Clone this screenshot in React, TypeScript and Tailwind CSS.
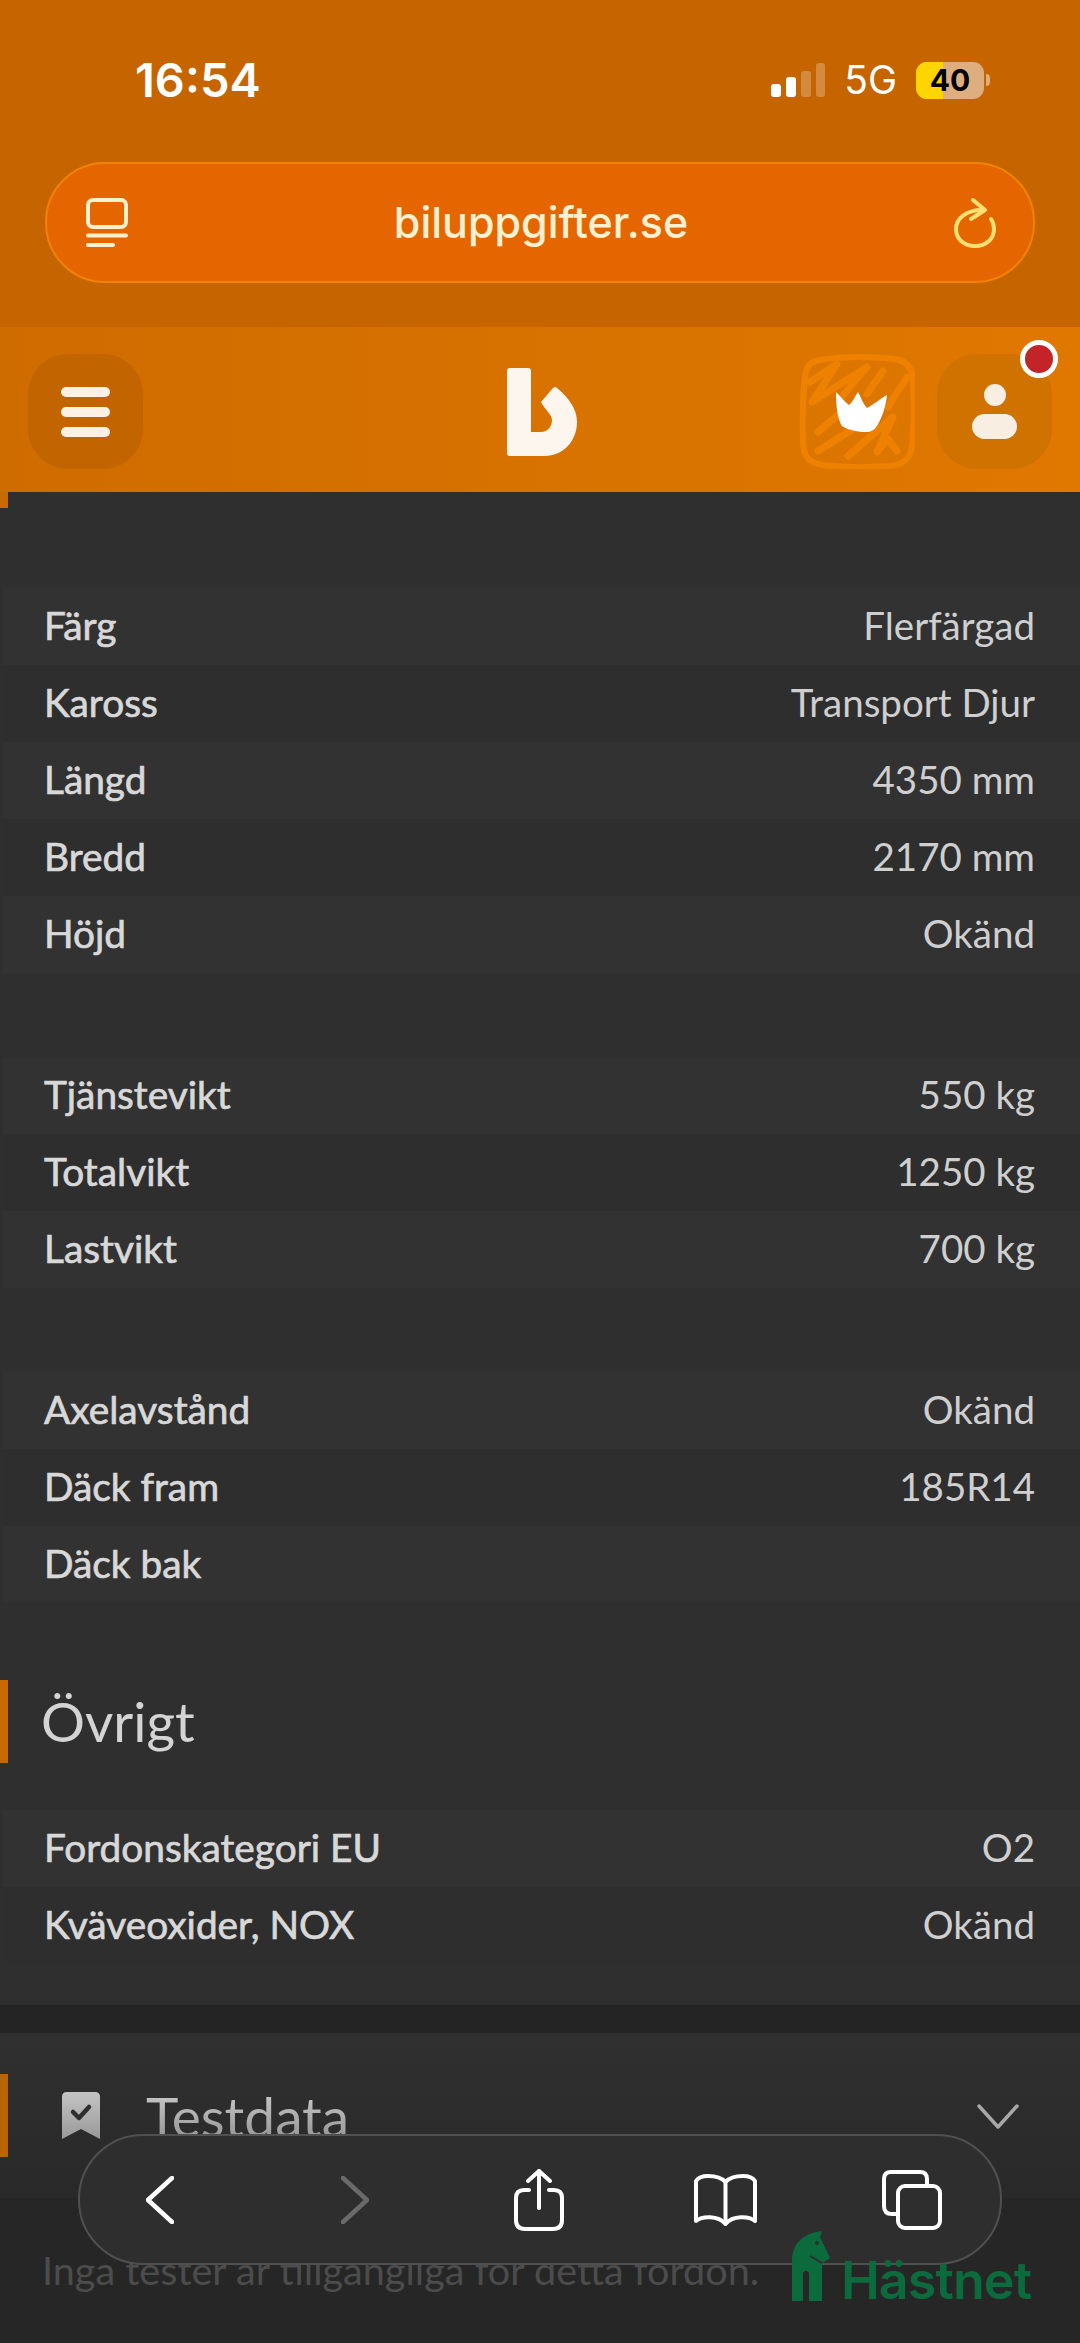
import React from "react";

type Row = [string, string];

const groups: Row[][] = [
  [
    ["Färg", "Flerfärgad"],
    ["Kaross", "Transport Djur"],
    ["Längd", "4350 mm"],
    ["Bredd", "2170 mm"],
    ["Höjd", "Okänd"],
  ],
  [
    ["Tjänstevikt", "550 kg"],
    ["Totalvikt", "1250 kg"],
    ["Lastvikt", "700 kg"],
  ],
  [
    ["Axelavstånd", "Okänd"],
    ["Däck fram", "185R14"],
    ["Däck bak", ""],
  ],
];

const other: Row[] = [
  ["Fordonskategori EU", "O2"],
  ["Kväveoxider, NOX", "Okänd"],
];

const DataRows = ({ rows }: { rows: Row[] }) => (
  <div className="ml-[3px]">
    {rows.map(([label, value], i) => (
      <div
        key={label}
        className={`flex h-[77px] items-center justify-between pb-[2px] pl-[41px] pr-[45px] text-[38.5px] text-[#cfcfcf] ${
          i % 2 === 0 ? "bg-[#323232]" : "bg-[#2e2e2e]"
        }`}
      >
        <span className="text-[38.8px] text-[#d8d8d8] [-webkit-text-stroke:0.7px_#d8d8d8]">{label}</span>
        <span>{value}</span>
      </div>
    ))}
  </div>
);

const StatusBar = () => (
  <div className="flex h-[162px] items-start justify-between pl-[135px] pr-[90px] pt-[55px] font-['Inter',sans-serif] text-white">
    <span className="text-[47px] font-semibold leading-[50px]">16:54</span>
    <div className="flex items-center pt-[5px]">
      <div className="flex items-end gap-[5px]">
        <div className="h-[13px] w-[10px] rounded-[3px] bg-white" />
        <div className="h-[20px] w-[10px] rounded-[3px] bg-white" />
        <div className="h-[26px] w-[10px] rounded-[3px] bg-white/25" />
        <div className="h-[34px] w-[9px] rounded-[3px] bg-white/25" />
      </div>
      <span className="ml-[19px] text-[39px] font-normal leading-[40px]">5G</span>
      <div className="relative ml-[19px] flex h-[37px] w-[68px] items-center justify-center overflow-hidden rounded-[11px] bg-[#dfae7f]">
        <div className="absolute inset-y-0 left-0 w-[27px] bg-[#ffd500]" />
        <span className="relative text-[30px] font-bold leading-none text-black">40</span>
      </div>
      <div className="ml-[2px] h-[12px] w-[4px] rounded-r-full bg-[#dfae7f]" />
    </div>
  </div>
);

const TabListIcon = () => (
  <svg width="42" height="50" viewBox="0 0 42 50" fill="none" stroke="#fff0d0" strokeWidth="4" strokeLinecap="round">
    <rect x="2" y="2" width="38" height="27" rx="5" />
    <path d="M2 37.5H40" />
    <path d="M2 47H27" />
  </svg>
);

const ReloadIcon = () => (
  <svg width="42" height="50" viewBox="0 0 42 50" fill="none" stroke="#ffe070" strokeWidth="4" strokeLinecap="round" strokeLinejoin="round">
    <path d="M19 2L31 12L17 21" />
    <path d="M28 12C13 12 2 20 2 31C2 41 10 48 21 48C32 48 40 41 40 31C40 27 39 24 37 21" />
  </svg>
);

const UrlBar = () => (
  <div className="mx-[45px] flex h-[121px] items-center justify-between rounded-[60px] border-2 border-[#f28204] bg-[#e56600] pl-[39px] pr-[37px]">
    <TabListIcon />
    <span className="font-['Inter',sans-serif] text-[43px] font-medium text-[#fff0d0]">biluppgifter.se</span>
    <ReloadIcon />
  </div>
);

const Logo = () => (
  <svg width="70" height="88" viewBox="0 0 70 88" fill="#fdf6ee">
    <path d="M3 0H21Q24 0 24 3V64H34C41 64 45 58 45 52C45 47 39 43 34 34L46 20Q48 18 50 20C62 30 70 41 70 54C70 74 55 88 38 88H3Q0 88 0 85V3Q0 0 3 0Z" />
  </svg>
);

const CrownBadge = () => (
  <svg width="115" height="115" viewBox="0 0 115 115" fill="none">
    <path
      d="M20 6C45 2 75 3 95 5C107 7 113 15 113 28C114 50 114 75 112 92C110 106 102 111 90 112C65 114 40 113 22 111C9 109 3 102 3 88C2 65 3 40 5 22C6 13 11 7 20 6Z"
      stroke="#ee8200"
      strokeWidth="6"
    />
    <g stroke="#ee8200" strokeWidth="7" strokeLinecap="round" strokeLinejoin="round">
      <path d="M10 28L37 10L12 48L67 13L40 45" />
      <path d="M83 17L67 40" />
      <path d="M107 23L88 53" />
      <path d="M18 78L37 62" />
      <path d="M18 97L53 75" />
      <path d="M48 102L93 63L77 98L88 85L97 97" />
    </g>
    <path
      d="M36 38C40 42 45 48 49 51C53 48 55 42 58 38C61 43 63 50 67 54C73 51 80 45 87 41C86 52 82 64 77 72C74 76 71 78 67 78C58 78 48 76 42 72C37 64 36 50 36 38Z"
      fill="#fff"
    />
  </svg>
);

const Header = () => (
  <div className="grid h-[165px] grid-cols-3 items-center bg-gradient-to-r from-[#cf6c00] to-[#e07800] px-[28px] pt-[4px]">
    <div className="flex h-[115px] w-[115px] flex-col items-center justify-center gap-[10px] rounded-[40px] bg-[#c26400]">
      <div className="h-[10px] w-[49px] rounded-full bg-[#fbf0e4]" />
      <div className="h-[10px] w-[49px] rounded-full bg-[#fbf0e4]" />
      <div className="h-[10px] w-[49px] rounded-full bg-[#fbf0e4]" />
    </div>
    <div className="flex justify-center pl-[4px]">
      <Logo />
    </div>
    <div className="flex justify-end gap-[22px]">
      <CrownBadge />
      <div className="relative flex h-[115px] w-[115px] flex-col items-center justify-center gap-[8px] rounded-[40px] bg-[#d07200]">
        <div className="h-[22px] w-[22px] rounded-full bg-[#f8eee2]" />
        <div className="h-[25px] w-[45px] rounded-full bg-[#f8eee2]" />
        <div className="absolute right-[-6px] top-[-14px] h-[38px] w-[38px] rounded-full border-[5px] border-white bg-[#c22428]" />
      </div>
    </div>
  </div>
);

const BookmarkCheck = () => (
  <svg width="38" height="48" viewBox="0 0 38 48">
    <defs>
      <linearGradient id="bookmarkFade" x1="0" y1="0" x2="0" y2="1">
        <stop offset="0" stopColor="#c4c4c4" />
        <stop offset="1" stopColor="#999999" />
      </linearGradient>
    </defs>
    <path d="M5 0H33Q38 0 38 5V47L19 37L0 47V5Q0 0 5 0Z" fill="url(#bookmarkFade)" />
    <path d="M11 20L17 26L27 15" fill="none" stroke="#2e2e2e" strokeWidth="4.5" strokeLinecap="round" strokeLinejoin="round" />
  </svg>
);

const BottomNav = () => (
  <div className="absolute left-[78px] top-[2134px] flex h-[131px] w-[924px] items-center rounded-[65px] border-2 border-[#505050] bg-[#2e2e2e] pl-[66px]">
    <svg width="28" height="48" viewBox="0 0 28 48" fill="none" stroke="#fff" strokeWidth="4.5" strokeLinecap="round" strokeLinejoin="round">
      <path d="M26 2L2 24L26 46" />
    </svg>
    <svg className="ml-[167px]" width="28" height="48" viewBox="0 0 28 48" fill="none" stroke="#6a6a6a" strokeWidth="4.5" strokeLinecap="round" strokeLinejoin="round">
      <path d="M2 2L26 24L2 46" />
    </svg>
    <svg className="ml-[145px]" width="50" height="62" viewBox="0 0 50 62" fill="none" stroke="#fff" strokeWidth="4" strokeLinecap="round" strokeLinejoin="round">
      <path d="M25 2V39" />
      <path d="M14 12L25 2L36 12" />
      <path d="M15 21H10Q2 21 2 29V51Q2 60 11 60H39Q48 60 48 51V29Q48 21 40 21H35" />
    </svg>
    <svg className="ml-[130px]" width="63" height="52" viewBox="0 0 63 52" fill="none" stroke="#fff" strokeWidth="4" strokeLinecap="round" strokeLinejoin="round">
      <path d="M31.5 8C27 3 20 2 14 2C8 2 4 4 2 7V47C8 42 24 41 31.5 50C39 41 55 42 61 47V7C59 4 55 2 49 2C43 2 36 3 31.5 8Z" />
      <path d="M31.5 8V48" />
    </svg>
    <svg className="ml-[125px]" width="60" height="60" viewBox="0 0 60 60" fill="none" stroke="#fff" strokeWidth="4" strokeLinejoin="round">
      <path d="M45 16V9Q45 2 38 2H9Q2 2 2 9V36Q2 44 10 44H16" />
      <rect x="16" y="16" width="42" height="42" rx="7" />
    </svg>
  </div>
);

const Watermark = () => (
  <div className="absolute left-[792px] top-[2231px] flex items-end">
    <svg width="38" height="70" viewBox="0 0 38 70" fill="#0b6b3d">
      <path d="M0 70V30C0 12 12 2 30 0L28 6L38 27L32 31L30 32V70H17V42Q14 37 11 42V70Z" />
      <circle cx="25" cy="12" r="2" fill="#2e2e2e" />
      <path d="M18 25L30 32" stroke="#2e2e2e" strokeWidth="2" />
    </svg>
    <span className="ml-[11px] font-['Inter',sans-serif] text-[52px] font-semibold leading-[40px] tracking-[-0.9px] text-[#0b6b3d]">Hästnet</span>
  </div>
);

export default function App() {
  return (
    <div className="relative h-[2343px] w-[1080px] overflow-hidden bg-[#262626] font-['Lato',sans-serif]">
      <div className="h-[327px] bg-[#c66400]">
        <StatusBar />
        <UrlBar />
      </div>
      <Header />

      <div className="bg-[#2f2f2f]">
        <div className="h-[16px] w-[8px] bg-[#c96a00]" />
        <div className="flex flex-col gap-[84px] pt-[80px]">
          {groups.map((rows) => (
            <DataRows key={rows[0][0]} rows={rows} />
          ))}
        </div>
        <div className="mt-[77px] flex h-[83px] items-center border-l-[8px] border-[#c96a00] pl-[33px]">
          <h2 className="text-[55px] leading-none text-[#d4d4d4]">Övrigt</h2>
        </div>
        <div className="mt-[47px] pb-[41px]">
          <DataRows rows={other} />
        </div>
      </div>
      <div className="h-[28px] bg-[#242424]" />

      <div className="h-[165px] bg-gradient-to-b from-[#303030] to-[#292929] pt-[41px]">
        <div className="flex h-[83px] items-center border-l-[8px] border-[#b96400] pl-[54px] pr-[60px]">
          <BookmarkCheck />
          <h2 className="ml-[46px] bg-gradient-to-b from-[#cfcfcf] to-[#8f8f8f] bg-clip-text text-[55px] leading-[60px] text-transparent">Testdata</h2>
          <svg className="ml-auto mt-[2px]" width="44" height="27" viewBox="0 0 44 27" fill="none" stroke="#a8a8a8" strokeWidth="3.5" strokeLinecap="round" strokeLinejoin="round">
            <path d="M3 3L22 24L41 3" />
          </svg>
        </div>
      </div>

      <p className="ml-[42px] mt-[49px] text-[39.6px] leading-[46px] text-[#4c4c4c]">Inga tester är tillgängliga för detta fordon.</p>

      <BottomNav />
      <Watermark />
    </div>
  );
}
